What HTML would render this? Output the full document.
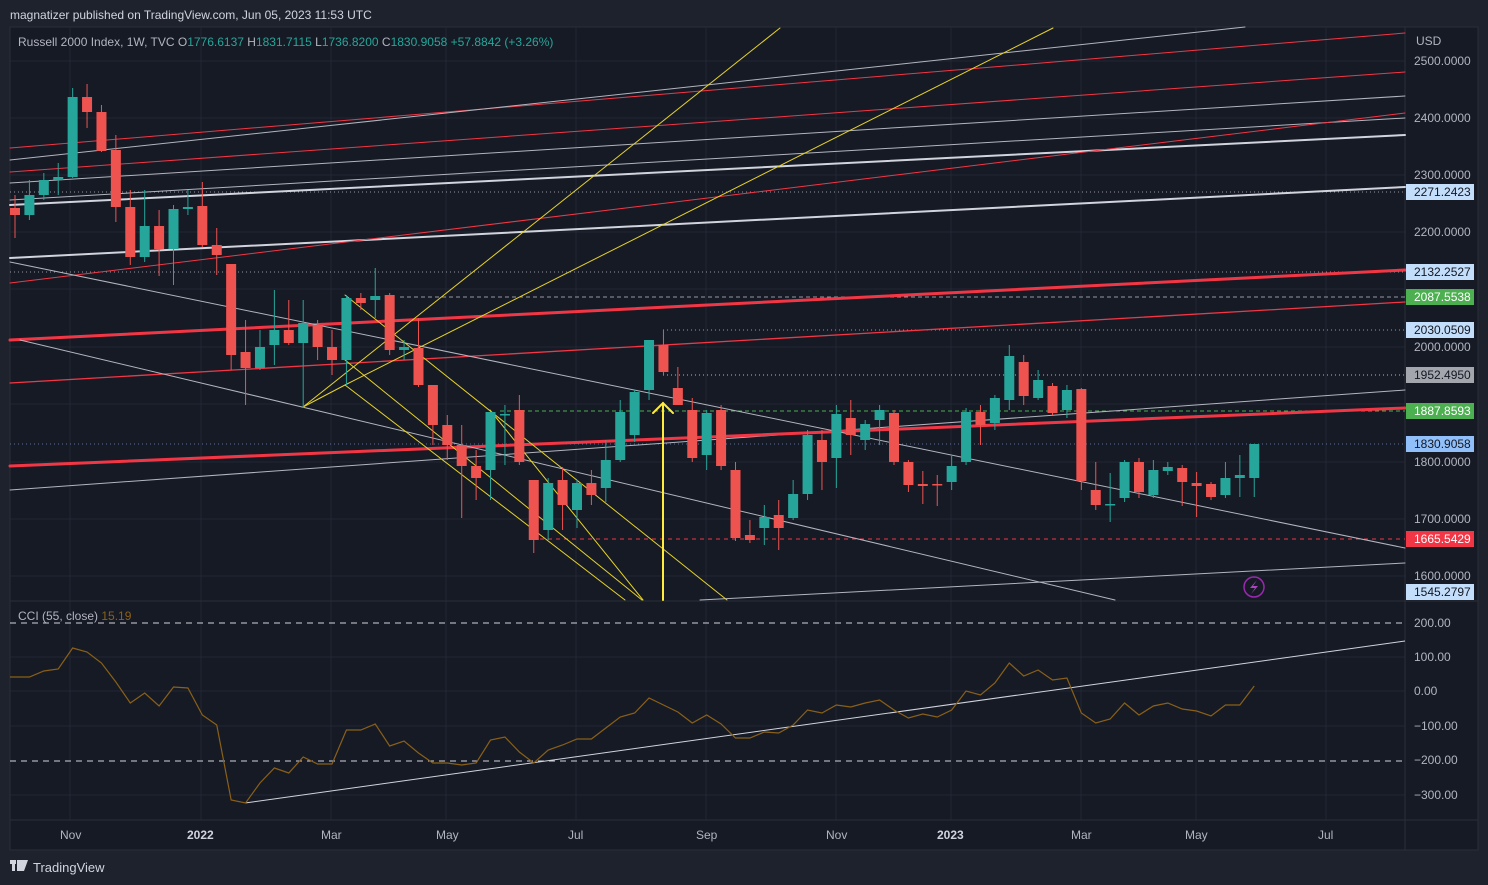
<!DOCTYPE html>
<html><head><meta charset="utf-8"><style>
html,body{margin:0;padding:0;background:#1e222d;width:1488px;height:885px;overflow:hidden;font-family:"Liberation Sans",sans-serif}
svg{position:absolute;left:0;top:0}
</style></head><body>
<svg id="s" width="1488" height="885" xmlns="http://www.w3.org/2000/svg" font-family="Liberation Sans, sans-serif">
<rect x="0" y="0" width="1488" height="885" fill="#1e222d"/>
<rect x="10" y="27" width="1468" height="823" fill="#161a25" stroke="#2a2e39"/>
<g id="grid" stroke="#232733" stroke-width="1"></g>
<line x1="10" y1="601" x2="1478" y2="601" stroke="#2a2e39"/>
<line x1="10" y1="820" x2="1478" y2="820" stroke="#2a2e39"/>
<line x1="1405" y1="27" x2="1405" y2="850" stroke="#2a2e39"/>
<g stroke-width="1" fill="none">
<line x1="10" y1="192" x2="1405" y2="192" stroke="#9598a1" stroke-dasharray="1,3"/>
<line x1="10" y1="272" x2="1405" y2="272" stroke="#9598a1" stroke-dasharray="1,3"/>
<line x1="400" y1="297" x2="1405" y2="297" stroke="#9598a1" stroke-dasharray="4,3"/>
<line x1="663" y1="330" x2="1405" y2="330" stroke="#9598a1" stroke-dasharray="1,3"/>
<line x1="663" y1="375" x2="1405" y2="375" stroke="#b2b5be" stroke-dasharray="1,3"/>
<line x1="500" y1="411" x2="1405" y2="411" stroke="#4caf50" stroke-dasharray="4,3"/>
<line x1="10" y1="444" x2="1405" y2="444" stroke="#5b6e9a" stroke-dasharray="1,3"/>
<line x1="540" y1="539" x2="1405" y2="539" stroke="#f23645" stroke-dasharray="4,4"/>
</g>
<g fill="none" stroke-linecap="round">
<line x1="10" y1="148" x2="1405" y2="33" stroke="#f23645" stroke-width="1"/>
<line x1="10" y1="160" x2="1245" y2="27" stroke="#b2b5be" stroke-width="1"/>
<line x1="10" y1="172" x2="1405" y2="72" stroke="#f23645" stroke-width="1"/>
<line x1="10" y1="183" x2="1405" y2="96" stroke="#b2b5be" stroke-width="1"/>
<line x1="10" y1="200" x2="1405" y2="118" stroke="#b2b5be" stroke-width="1"/>
<line x1="10" y1="205" x2="1405" y2="135" stroke="#d1d4dc" stroke-width="2"/>
<line x1="10" y1="258" x2="1405" y2="187" stroke="#d1d4dc" stroke-width="2"/>
<line x1="10" y1="283" x2="1405" y2="113" stroke="#f23645" stroke-width="1"/>
<line x1="10" y1="340" x2="1405" y2="270" stroke="#f23645" stroke-width="3"/>
<line x1="10" y1="383" x2="1405" y2="302" stroke="#f23645" stroke-width="1.3"/>
<line x1="10" y1="490" x2="1405" y2="390" stroke="#b2b5be" stroke-width="1"/>
<line x1="10" y1="466" x2="1405" y2="408" stroke="#f23645" stroke-width="3"/>
<line x1="10" y1="262" x2="1405" y2="548" stroke="#b2b5be" stroke-width="1"/>
<line x1="20" y1="340" x2="1115" y2="600" stroke="#b2b5be" stroke-width="1"/>
<line x1="700" y1="600" x2="1405" y2="563" stroke="#b2b5be" stroke-width="1"/>
<line x1="303" y1="407" x2="780" y2="28" stroke="#e6d22a" stroke-width="1"/>
<line x1="303" y1="407" x2="345" y2="385" stroke="#e6d22a" stroke-width="1"/>
<line x1="345" y1="385" x2="1053" y2="28" stroke="#e6d22a" stroke-width="1"/>
<line x1="345" y1="385" x2="625" y2="600" stroke="#e6d22a" stroke-width="1"/>
<line x1="345" y1="360" x2="642" y2="600" stroke="#e6d22a" stroke-width="1"/>
<line x1="345" y1="295" x2="727" y2="600" stroke="#e6d22a" stroke-width="1"/>
<line x1="490" y1="410" x2="643" y2="600" stroke="#e6d22a" stroke-width="1"/>
<line x1="663" y1="600" x2="663" y2="403" stroke="#ffeb3b" stroke-width="2"/>
<polyline points="653,413 663,403 673,413" stroke="#ffeb3b" stroke-width="2"/>
</g>
<g id="candles"></g>
<line x1="10" y1="623" x2="1405" y2="623" stroke="#d1d4dc" stroke-dasharray="6,5"/>
<line x1="10" y1="761" x2="1405" y2="761" stroke="#d1d4dc" stroke-dasharray="6,5"/>
<line x1="245" y1="803" x2="1405" y2="641" stroke="#d1d4dc" stroke-width="1"/>
<polyline id="cci" fill="none" stroke="#8a6018" stroke-width="1.2" points=""/>
<circle cx="1254" cy="587" r="10" fill="none" stroke="#9c27b0" stroke-width="1.5"/>
<path d="M1257 580 L1250 588 L1255 588 L1251 594 L1258 586 L1253 586 Z" fill="#b040c8"/>
<g font-size="12" fill="#b2b5be">
<text x="10" y="19" fill="#d1d4dc">magnatizer published on TradingView.com, Jun 05, 2023 11:53 UTC</text>
<text x="18" y="46" fill="#b2b5be">Russell 2000 Index, 1W, TVC  <tspan fill="#b2b5be">O</tspan><tspan fill="#26a69a">1776.6137</tspan>  <tspan>H</tspan><tspan fill="#26a69a">1831.7115</tspan>  <tspan>L</tspan><tspan fill="#26a69a">1736.8200</tspan>  <tspan>C</tspan><tspan fill="#26a69a">1830.9058</tspan>  <tspan fill="#26a69a">+57.8842 (+3.26%)</tspan></text>
<text x="18" y="620">CCI (55, close)  <tspan fill="#8a6018">15.19</tspan></text>
<text x="1416" y="45">USD</text>
<text x="1414" y="65">2500.0000</text><text x="1414" y="122">2400.0000</text><text x="1414" y="179">2300.0000</text>
<text x="1414" y="236">2200.0000</text><text x="1414" y="351">2000.0000</text><text x="1414" y="466">1800.0000</text>
<text x="1414" y="523">1700.0000</text><text x="1414" y="580">1600.0000</text>
<text x="1414" y="627">200.00</text><text x="1414" y="661">100.00</text><text x="1414" y="695">0.00</text>
<text x="1414" y="730">−100.00</text><text x="1414" y="764">−200.00</text><text x="1414" y="799">−300.00</text>
<text x="60" y="839">Nov</text><text x="187" y="839" font-weight="bold" fill="#d1d4dc">2022</text><text x="321" y="839">Mar</text>
<text x="436" y="839">May</text><text x="568" y="839">Jul</text><text x="696" y="839">Sep</text><text x="826" y="839">Nov</text>
<text x="937" y="839" font-weight="bold" fill="#d1d4dc">2023</text><text x="1071" y="839">Mar</text><text x="1185" y="839">May</text><text x="1318" y="839">Jul</text>
</g>
<g id="badges" font-size="12"></g>
<g fill="#d1d4dc"><rect x="10" y="860" width="6" height="4"/><rect x="12" y="860" width="3" height="11"/><rect x="17" y="860" width="6" height="11"/><path d="M23 860 L28 860 L24 871 L20 871Z"/></g>
<text x="33" y="872" font-size="13" fill="#d1d4dc">TradingView</text>
</svg>
<script>
var N="http://www.w3.org/2000/svg";
function el(t,a,p){var e=document.createElementNS(N,t);for(var k in a)e.setAttribute(k,a[k]);p.appendChild(e);return e;}
var g=document.getElementById('grid');
[61,118,175,232,289,347,404,462,519,576,657,691,726,795].forEach(function(y){el('line',{x1:10,y1:y,x2:1405,y2:y},g)});
[70,201,331,446,576,706,836,951,1081,1196,1326].forEach(function(x){el('line',{x1:x,y1:27,x2:x,y2:820},g)});
var c=[[208,215,195,238],[215,195,180,220],[195,180,173,200],[180,177,163,195],[177,97,88,178],[97,112,84,128],[112,151,105,152],[150,207,135,222],[207,257,190,265],[257,226,190,262],[226,249,210,276],[249,209,205,285],[209,207,190,215],[206,245,182,247],[245,255,228,275],[264,355,264,370],[352,368,320,405],[368,347,330,370],[345,330,290,365],[330,343,300,345],[343,323,300,408],[325,347,320,360],[347,360,330,375],[360,298,295,385],[298,303,293,310],[300,296,268,318],[295,350,293,355],[350,347,340,360],[348,385,318,387],[385,425,385,445],[425,445,415,460],[445,466,425,518],[466,478,450,500],[470,412,412,500],[415,414,405,465],[410,462,395,465],[480,540,480,553],[530,483,478,540],[480,505,467,530],[510,483,480,528],[483,495,470,505],[488,460,440,502],[460,412,400,462],[435,392,390,442],[390,340,340,400],[345,372,330,375],[388,405,367,405],[410,458,398,462],[455,413,410,470],[410,466,405,470],[470,538,462,541],[535,540,520,543],[528,517,505,545],[515,528,500,550],[518,494,480,520],[494,435,430,500],[440,462,430,490],[458,414,405,488],[418,435,400,455],[440,424,420,450],[420,410,405,445],[413,462,410,465],[462,485,460,492],[484,486,471,504],[484,485,475,506],[482,466,456,490],[462,412,408,465],[412,425,405,445],[423,398,395,430],[400,356,345,410],[362,396,355,405],[398,380,370,400],[386,413,383,415],[410,390,385,418],[389,481,388,490],[490,505,462,510],[505,504,473,522],[498,462,460,502],[462,492,458,498],[495,470,460,498],[471,467,462,475],[468,482,465,506],[483,486,472,517],[484,497,482,500],[495,478,462,498],[478,475,455,497],[478,444,444,497]];
var cg=document.getElementById('candles');
c.forEach(function(d,i){var x=15+i*14.41;var up=d[1]<d[0];var col=up?'#26a69a':'#ef5350';
el('line',{x1:x,y1:d[2],x2:x,y2:d[3],stroke:col,'stroke-width':1},cg);
var t=Math.min(d[0],d[1]),h=Math.max(Math.abs(d[1]-d[0]),1.5);
el('rect',{x:x-5,y:t,width:10,height:h,fill:col},cg);});
var cy=[677,671,669,648,652,663,682,703,693,706,687,688,715,725,800,803,783,768,773,757,764,764,730,730,724,746,741,753,763,763,765,763,740,737,752,763,750,745,739,739,728,717,713,698,705,712,723,715,724,738,738,732,733,725,710,713,705,707,703,700,710,718,714,717,710,691,695,683,663,676,670,680,678,713,723,719,703,715,706,703,709,711,716,705,705,686];
document.getElementById('cci').setAttribute('points','10,677 '+cy.map(function(y,i){return (15+(i+1)*14.41)+','+y}).join(' '));
var b=[[192,'2271.2423','#c3defa','#131722'],[272,'2132.2527','#c3defa','#131722'],[297,'2087.5538','#4caf50','#fff'],[330,'2030.0509','#c3defa','#131722'],[375,'1952.4950','#a3a6ad','#131722'],[411,'1887.8593','#4caf50','#fff'],[444,'1830.9058','#90bff9','#131722'],[539,'1665.5429','#f23645','#fff'],[592,'1545.2797','#c3defa','#131722']];
var bg=document.getElementById('badges');
b.forEach(function(d){el('rect',{x:1406,y:d[0]-8,width:68,height:16,fill:d[2]},bg);var t=el('text',{x:1414,y:d[0]+4,fill:d[3]},bg);t.textContent=d[1];});
</script>
</body></html>
